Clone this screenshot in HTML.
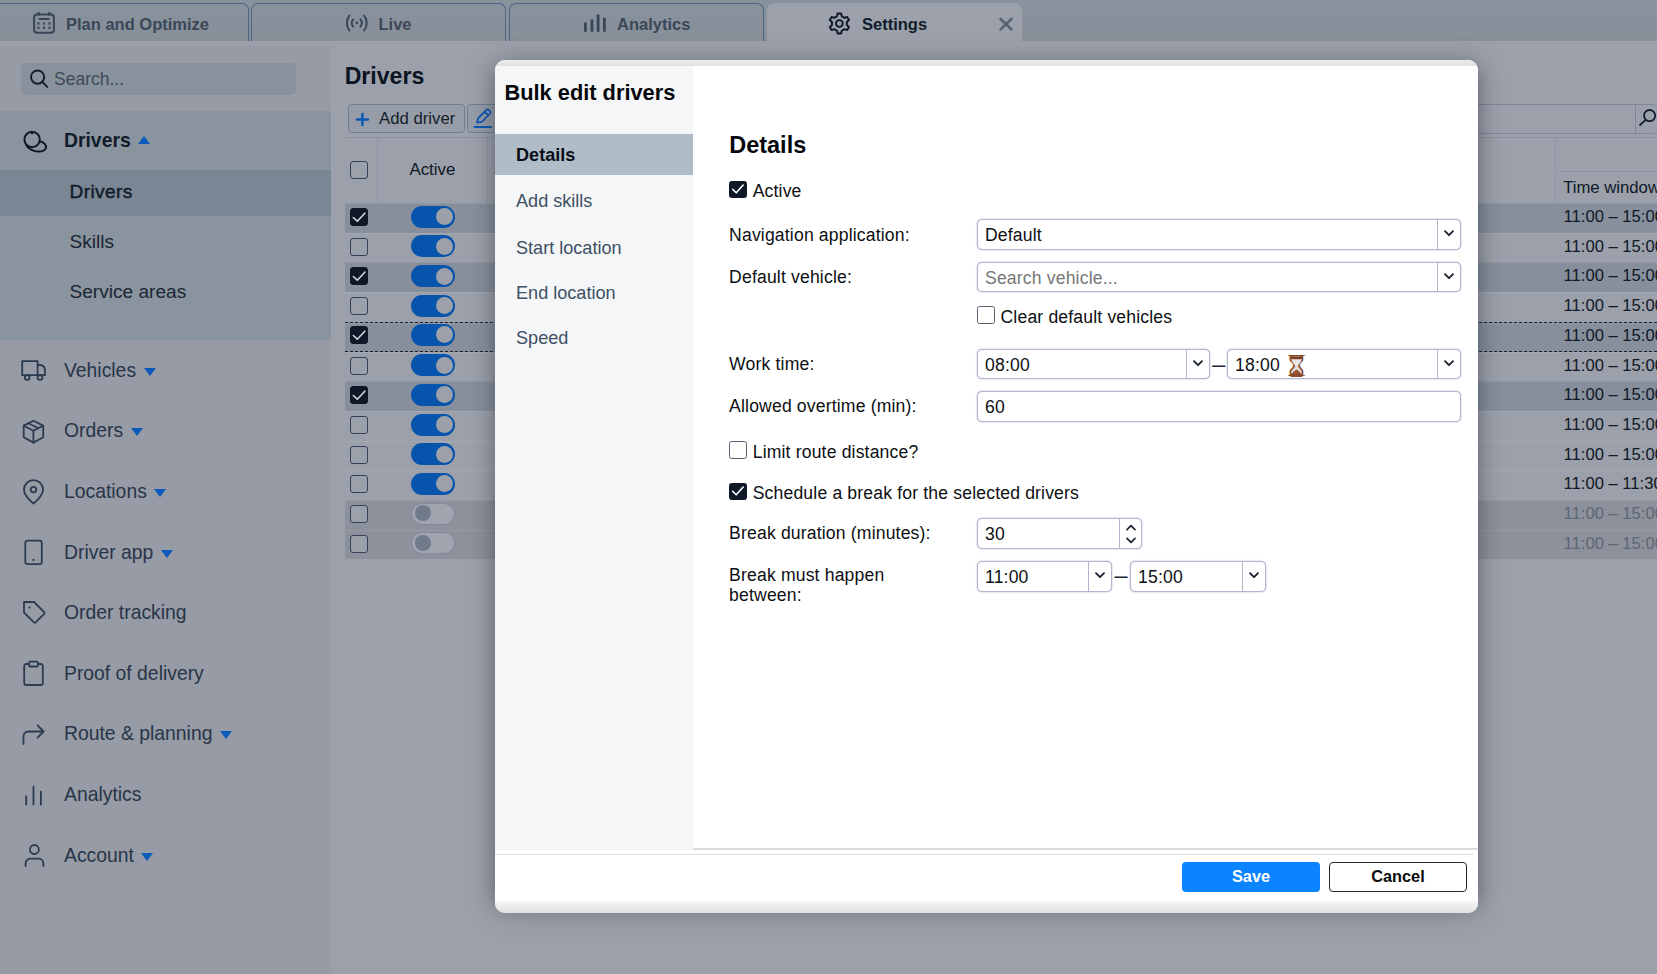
<!DOCTYPE html>
<html lang="en">
<head>
<meta charset="utf-8">
<title>Bulk edit drivers</title>
<style>
*{box-sizing:border-box;margin:0;padding:0}
html,body{width:1657px;height:974px;overflow:hidden}
body{font-family:"Liberation Sans",Arial,sans-serif;background:#9ba0aa;color:#111c2b;position:relative}
.abs{position:absolute}
svg{display:block;overflow:visible}
/* ---------- top tab bar ---------- */
#tabbar{position:absolute;left:0;top:0;width:1657px;height:41px;background:linear-gradient(#88929c 30%,#888f99)}
.tab{position:absolute;top:3px;height:38px;border:1.5px solid #4d6585;border-bottom:none;border-radius:7px 7px 0 0;font-weight:bold;font-size:16.5px;color:#3a4758;white-space:nowrap}
.tab span{position:absolute;top:10px;line-height:20px}
.tab.active{background:#9ba0aa;border-color:#9ba0aa;color:#111c2b}
/* ---------- sidebar ---------- */
#sidebar{position:absolute;left:0;top:47px;width:331px;height:927px;background:#969ba5;box-shadow:0 -1px 0 #969ba5}
#search{position:absolute;left:21px;top:16px;width:275px;height:32px;border-radius:5px;background:#88929c;font-size:17.5px;color:#3f4a59}
#search span{position:absolute;left:33px;top:6px;line-height:20px}
#grp{position:absolute;left:0;top:64px;width:331px;height:229px;background:#8a949e}
#grp .sel{position:absolute;left:0;top:58.5px;width:331px;height:46px;background:#7a8693}
.nav{position:absolute;left:64px;margin-top:-1.2px;font-size:19.35px;line-height:22px;color:#283548;white-space:nowrap}
.nav b{color:#111c2b}
.sub{position:absolute;left:69.5px;margin-top:-.8px;font-size:19.1px;line-height:22px;color:#1a2636;white-space:nowrap}
.tri{display:inline-block;width:0;height:0;border-left:6.5px solid transparent;border-right:6.5px solid transparent;margin-left:7.5px;position:relative}
.tri.dn{border-top:8px solid #0c5ab9;top:-1px}
.tri.up{border-bottom:8px solid #0c5ab9;top:-3px}
.ico{position:absolute;left:21px;width:26px;height:26px;fill:none;stroke:#2f3c4f;stroke-width:1.7;stroke-linecap:round;stroke-linejoin:round}
/* ---------- main ---------- */
#main h1{position:absolute;left:344.7px;top:62.4px;font-size:23.1px;line-height:28px;font-weight:bold;color:#0b1422}
.tbtn{position:absolute;top:104px;height:29px;border:1px solid #707c90;border-radius:3.5px;background:#979da8;font-size:16.75px;color:#141d2b;white-space:nowrap}
.row{position:absolute;left:345px;width:1312px;height:29.75px;box-shadow:inset 0 1px 0 rgba(255,255,255,.09)}
.row.on{background:#878f9c}
.row.off{background:#8c919b}
.row.foc{border-top:1.5px dashed #151e2b;border-bottom:1.5px dashed #151e2b}
.row.foc>*{margin-top:-1.5px}
.cb{position:absolute;width:18px;height:18px;border:1.5px solid #334159;border-radius:3px;background:#9ba0aa}
.cb.ck{background:#0f1826;border-color:#0f1826}
.cb svg{position:absolute;left:-1.5px;top:-1.5px}
.tg{position:absolute;width:44px;height:22px;border-radius:11px;background:#0754ac}
.tg i{position:absolute;right:2.5px;top:2.5px;width:17px;height:17px;border-radius:50%;background:#9ba0aa}
.tg.no{background:#9fa4ae;border:1.5px solid #828b99}
.tg.no i{left:2.5px;right:auto;top:1.5px;width:16px;height:16px;background:#6f7a8a}
.tw{position:absolute;left:1218.6px;margin-top:-1px;font-size:16.6px;line-height:20px;color:#0f1826;white-space:nowrap}
/* ---------- modal ---------- */
#modal{position:absolute;left:495px;top:60px;width:983px;height:852.6px;border-radius:10px;background:#fff;box-shadow:0 0 26px 1px rgba(45,50,62,.23),-12px 0 18px -12px rgba(45,50,62,.4),12px 0 18px -12px rgba(45,50,62,.4);overflow:hidden}
#mtop{position:absolute;left:0;top:0;width:983px;height:6px;background:linear-gradient(#ececec,#e0e0e0)}
#mbot{position:absolute;left:0;top:840.5px;width:983px;height:12.2px;background:linear-gradient(#f6f6f6,#e0e0e0)}
#mnav{position:absolute;left:0;top:6px;width:198px;height:784px;background:#f4f6f8}
#mnav h2{position:absolute;left:9.5px;top:14px;font-size:21.8px;line-height:26px;font-weight:bold;color:#05070b;white-space:nowrap}
#mnav .it{position:absolute;left:0;width:198px;height:40.5px;font-size:18.1px;line-height:20px;color:#3e5064;padding:11.4px 0 0 21px;white-space:nowrap}
#mnav .it.cur{background:#b0bdc9;color:#0a0f17;font-weight:bold}
#mcont{position:absolute;left:198px;top:6px;width:785px;height:784px;background:#fff;border-bottom:2px solid #dcdcdc}
#mfootline{position:absolute;left:0;top:794px;width:978px;height:1px;background:#d8e0e8}
.lbl{position:absolute;left:234.1px;margin-top:.5px;letter-spacing:.16px;font-size:17.6px;line-height:20px;color:#0d0f12;white-space:nowrap}
.fld{position:absolute;height:30px;border:1px solid #b2b5cd;border-radius:5px;background:#fff;font-size:17.6px;letter-spacing:.16px;color:#0d0f12;box-shadow:0 0 1.6px rgba(120,125,175,.75)}
.fld span{position:absolute;left:7px;top:4.9px;line-height:20px;white-space:nowrap}
.fld .dd{position:absolute;right:0;top:0;width:23px;height:100%;border-left:1px solid #b2b5cd}
.fld .dd svg{position:absolute;left:6px;top:9.5px}
.hg{position:absolute;left:52.2px;top:-2.9px;font-style:normal;font-family:"DejaVu Sans",sans-serif;color:#8b4a2b;font-size:29.5px;line-height:29.5px;letter-spacing:0;text-shadow:0 0 .6px #a86a48}
.mcb svg{position:absolute;left:-1.3px;top:-1.3px}
.dash{font-size:23.4px;line-height:23.4px;color:#1c2432}
.mcb{position:absolute;width:17.8px;height:17.8px;border:1.3px solid #5a6170;border-radius:2.5px;background:#fff}
.mcb.ck{background:#0f1826;border-color:#0f1826}
.btn{position:absolute;top:802px;width:138px;height:30px;border-radius:4px;font-size:16.3px;font-weight:bold;text-align:center;line-height:29px}
</style>
</head>
<body>
<!-- TOP TABS -->
<div id="tabbar">
  <div class="tab" style="left:-8px;width:257px"><span style="left:73px">Plan and Optimize</span></div>
  <div class="tab" style="left:251px;width:255px"><span style="left:126.5px">Live</span></div>
  <div class="tab" style="left:509px;width:255px"><span style="left:107px">Analytics</span></div>
  <div class="tab active" style="left:767px;width:255px"><span style="left:94px">Settings</span></div>
  <svg class="abs" style="left:30.0px;top:10.0px" width="28.0" height="26.0" viewBox="0 0 28.0 26.0" fill="none" stroke="#394658" stroke-width="2" stroke-linecap="round" stroke-linejoin="round"><rect x="4.1" y="4.6" width="19.8" height="18.2" rx="2.8"/><path d="M8.7 3.2 V4.5 M19.3 3.2 V4.5" stroke-width="2.6"/><path d="M9.6 9 H18.6" stroke-width="2.2"/><g fill="#394658" stroke="none"><rect x="7.3" y="12.4" width="2.2" height="2.2"/><rect x="12.8" y="12.4" width="2.2" height="2.2"/><rect x="18.4" y="12.4" width="2.2" height="2.2"/><rect x="7.3" y="16.7" width="2.2" height="2.2"/><rect x="12.8" y="16.7" width="2.2" height="2.2"/><rect x="18.4" y="16.7" width="2.2" height="2.2"/></g></svg>
  <svg class="abs" style="left:343.0px;top:11.0px" width="28.0" height="24.0" viewBox="0 0 28.0 24.0" fill="none" stroke="#394658" stroke-width="2" stroke-linecap="round" stroke-linejoin="round"><circle cx="13.8" cy="12" r="1.4" fill="#394658" stroke="none"/><path d="M10.2 8.4 a5.6 5.6 0 0 0 0 7.2 M17.4 8.4 a5.6 5.6 0 0 1 0 7.2"/><path d="M6.4 4.6 a12 12 0 0 0 0 14.8 M21.2 4.6 a12 12 0 0 1 0 14.8"/></svg>
  <svg class="abs" style="left:580.0px;top:10.0px" width="30.0" height="24.0" viewBox="0 0 30.0 24.0" fill="none" stroke="#394658" stroke-width="2.8" stroke-linecap="round" stroke-linejoin="round"><path d="M5.4 12.4 V21.7 M12 9.6 V21.7 M18.1 4.5 V21.7 M24.4 7.7 V21.7" stroke-linecap="butt"/></svg>
  <svg class="abs" style="left:827.0px;top:10.5px" width="25.0" height="25.0" viewBox="0 0 25.0 25.0" fill="none" stroke="#0d1726" stroke-width="1.9" stroke-linecap="round" stroke-linejoin="round"><path d="M10.05 5.27 L10.59 2.46 L14.21 2.46 L14.75 5.27 L17.49 6.85 L20.19 5.92 L22.00 9.04 L19.83 10.92 L19.83 14.08 L22.00 15.96 L20.19 19.08 L17.49 18.15 L14.75 19.73 L14.21 22.54 L10.59 22.54 L10.05 19.73 L7.31 18.15 L4.61 19.08 L2.80 15.96 L4.97 14.08 L4.97 10.92 L2.80 9.04 L4.61 5.92 L7.31 6.85 Z"/><circle cx="12.4" cy="12.5" r="3.4"/></svg>
  <svg class="abs" style="left:998.0px;top:16.0px" width="16.0" height="16.0" viewBox="0 0 16.0 16.0" fill="none" stroke="#566173" stroke-width="2.6" stroke-linecap="round" stroke-linejoin="round"><path d="M2.6 3 L13.4 13.4 M13.4 3 L2.6 13.4"/></svg>
</div>
<!-- SIDEBAR -->
<div id="sidebar">
  <div id="search"><span>Search...</span></div>
  <div id="grp"><div class="sel"></div></div>
  <svg class="abs" style="left:20.0px;top:81.0px" width="30.0" height="28.0" viewBox="0 0 30.0 28.0" fill="none" stroke="#0d1726" stroke-width="1.9" stroke-linecap="round" stroke-linejoin="round"><circle cx="12.1" cy="11.4" r="7.7"/><path d="M12.1 4 V6.2" stroke-width="2.4" stroke-linecap="butt"/><path d="M19.6 13.2 C23.6 14 26.8 17 25.9 20 C24.8 23.6 18.5 24.4 13.5 22.6 C10.5 21.5 7.6 19.4 6.2 17"/></svg>
  <svg class="abs" style="left:20.0px;top:311.0px" width="28.0" height="24.0" viewBox="0 0 28.0 24.0" fill="none" stroke="#2d3b50" stroke-width="1.8" stroke-linecap="round" stroke-linejoin="round"><path d="M2.2 3.2 H17.6 V17.2 H2.2 Z"/><path d="M17.6 7 H20.5 C23.5 7.6 25 10 25 12.5 V17.2 H17.6"/><circle cx="7.2" cy="19.4" r="2.4" fill="#969ba5"/><circle cx="20" cy="19.4" r="2.4" fill="#969ba5"/></svg>
  <svg class="abs" style="left:20.0px;top:371.0px" width="28.0" height="28.0" viewBox="0 0 28.0 28.0" fill="none" stroke="#2d3b50" stroke-width="1.8" stroke-linecap="round" stroke-linejoin="round"><path d="M13.4 2.7 L23.2 7.6 V19.2 L13.4 24.6 L3.7 19.2 V7.6 Z"/><path d="M3.9 7.7 L13.4 12.8 L23 7.7"/><path d="M13.4 12.8 V24.4"/><path d="M8.4 5.2 L18.3 10.2"/></svg>
  <svg class="abs" style="left:20.0px;top:430.0px" width="28.0" height="30.0" viewBox="0 0 28.0 30.0" fill="none" stroke="#2d3b50" stroke-width="1.8" stroke-linecap="round" stroke-linejoin="round"><path d="M13.5 26.5 C13.5 26.5 4 19.5 4 12.6 A9.5 9.5 0 0 1 23 12.6 C23 19.5 13.5 26.5 13.5 26.5 Z"/><circle cx="13.5" cy="12.6" r="2.8"/></svg>
  <svg class="abs" style="left:20.0px;top:491.0px" width="28.0" height="30.0" viewBox="0 0 28.0 30.0" fill="none" stroke="#2d3b50" stroke-width="1.8" stroke-linecap="round" stroke-linejoin="round"><rect x="5.3" y="2.7" width="16.5" height="23.4" rx="2.4"/><circle cx="13.5" cy="21.9" r="1.1" fill="#2d3b50" stroke="none"/></svg>
  <svg class="abs" style="left:20.0px;top:552.0px" width="28.0" height="28.0" viewBox="0 0 28.0 28.0" fill="none" stroke="#2d3b50" stroke-width="1.8" stroke-linecap="round" stroke-linejoin="round"><path d="M4 3 H14 L24.2 13.2 a1.2 1.2 0 0 1 0 1.7 L15.6 23.4 a1.2 1.2 0 0 1 -1.7 0 L4 13.5 Z"/><circle cx="9.4" cy="8.6" r="1.1" fill="#2d3b50" stroke="none"/></svg>
  <svg class="abs" style="left:20.0px;top:612.0px" width="28.0" height="30.0" viewBox="0 0 28.0 30.0" fill="none" stroke="#2d3b50" stroke-width="1.8" stroke-linecap="round" stroke-linejoin="round"><path d="M9 5 H6.2 a2 2 0 0 0 -2 2 V24 a2 2 0 0 0 2 2 H20.8 a2 2 0 0 0 2 -2 V7 a2 2 0 0 0 -2 -2 H18"/><rect x="9" y="2.7" width="9" height="4.8" rx="1.6"/></svg>
  <svg class="abs" style="left:20.0px;top:674.0px" width="28.0" height="26.0" viewBox="0 0 28.0 26.0" fill="none" stroke="#2d3b50" stroke-width="1.8" stroke-linecap="round" stroke-linejoin="round"><path d="M3.5 23 V15.5 a5 5 0 0 1 5 -5 H23.2"/><path d="M17.6 4.3 L23.6 10.5 L17.6 16.7"/></svg>
  <svg class="abs" style="left:20.0px;top:736.0px" width="28.0" height="26.0" viewBox="0 0 28.0 26.0" fill="none" stroke="#2d3b50" stroke-width="1.8" stroke-linecap="round" stroke-linejoin="round"><path d="M6.2 13.3 V21.6 M13.5 3.6 V21.6 M20.9 8.6 V21.6"/></svg>
  <svg class="abs" style="left:20.0px;top:794.0px" width="28.0" height="28.0" viewBox="0 0 28.0 28.0" fill="none" stroke="#2d3b50" stroke-width="1.8" stroke-linecap="round" stroke-linejoin="round"><circle cx="14.4" cy="8.5" r="4.5"/><path d="M5.6 25 V22.5 a4.8 4.8 0 0 1 4.8 -4.8 H18.6 a4.8 4.8 0 0 1 4.8 4.8 V25"/></svg>
  <svg class="abs" style="left:28.0px;top:21.0px" width="22.0" height="22.0" viewBox="0 0 22.0 22.0" fill="none" stroke="#141e30" stroke-width="1.9" stroke-linecap="round" stroke-linejoin="round"><circle cx="9.6" cy="9.1" r="6.6"/><path d="M14.4 14 L19.3 18.9"/></svg>
  <div class="nav" style="top:83px"><b>Drivers</b><i class="tri up"></i></div>
  <div class="sub" style="top:135px"><span style="letter-spacing:.4px;-webkit-text-stroke:.45px #111c2b;color:#111c2b">Drivers</span></div>
  <div class="sub" style="top:185px">Skills</div>
  <div class="sub" style="top:235px">Service areas</div>
  <div class="nav" style="top:313px">Vehicles<i class="tri dn"></i></div>
  <div class="nav" style="top:373px">Orders<i class="tri dn"></i></div>
  <div class="nav" style="top:434px">Locations<i class="tri dn"></i></div>
  <div class="nav" style="top:495px">Driver app<i class="tri dn"></i></div>
  <div class="nav" style="top:555px">Order tracking</div>
  <div class="nav" style="top:616px">Proof of delivery</div>
  <div class="nav" style="top:676px">Route &amp; planning<i class="tri dn"></i></div>
  <div class="nav" style="top:737px">Analytics</div>
  <div class="nav" style="top:798px">Account<i class="tri dn"></i></div>
</div>
<!-- MAIN -->
<div id="main">
  <h1>Drivers</h1>
  <div class="tbtn" style="left:348px;width:117px"><span class="abs" style="left:30px;top:4px;line-height:20px">Add driver</span></div>
  <div class="tbtn" style="left:467px;width:60px"></div>
  <div class="abs" style="left:345px;top:137px;width:1312px;height:1px;background:#8a92a0"></div>
  <div class="abs" style="left:377px;top:138px;width:1px;height:65px;background:#8d95a2"></div>
  <div class="abs" style="left:487px;top:138px;width:1px;height:65px;background:#8d95a2"></div>
  <div class="abs" style="left:1555px;top:138px;width:1px;height:65px;background:#8d95a2"></div>
  <div class="abs" style="left:1555px;top:171px;width:102px;height:1px;background:#8d95a2"></div>
  <div class="cb" style="left:350px;top:160.7px"></div>
  <div class="abs" style="left:409.4px;top:160px;font-size:16.9px;line-height:20px;color:#0f1826">Active</div>
  <div class="abs" style="left:1563.2px;top:177.6px;font-size:16.7px;line-height:20px;color:#0f1826;white-space:nowrap">Time window</div>
  <div class="abs" style="left:1300px;top:104px;width:357.5px;height:30px;border:1px solid #7d8797;border-radius:5px"></div>
  <div class="abs" style="left:1635px;top:104px;width:1px;height:30px;background:#7d8797"></div>
  <svg class="abs" style="left:354.0px;top:110.5px" width="17.0" height="17.0" viewBox="0 0 17.0 17.0" fill="none" stroke="#0c58b4" stroke-width="2.5" stroke-linecap="round" stroke-linejoin="round"><path d="M8.4 3 V14 M2.9 8.5 H13.9"/></svg>
  <svg class="abs" style="left:472.0px;top:106.0px" width="24.0" height="24.0" viewBox="0 0 24.0 24.0" fill="none" stroke="#0c58b4" stroke-width="1.8" stroke-linecap="round" stroke-linejoin="round"><path d="M5 16.6 L6.2 12.2 L14.4 4 a1.6 1.6 0 0 1 2.3 0 L18 5.3 a1.6 1.6 0 0 1 0 2.3 L9.8 15.8 Z M12.8 5.8 L16.2 9.2"/><path d="M2.6 21 H19" stroke-width="2.2"/></svg>
  <svg class="abs" style="left:1638.0px;top:107.0px" width="22.0" height="22.0" viewBox="0 0 22.0 22.0" fill="none" stroke="#141e30" stroke-width="1.8" stroke-linecap="round" stroke-linejoin="round"><circle cx="11.6" cy="8.6" r="5.6"/><path d="M7.6 12.8 L2 18"/></svg>
  <div id="rows">
    <div class="row on" style="top:203.00px"><div class="cb ck" style="left:5px;top:5px"><svg width="18" height="18" viewBox="0 0 18 18"><path d="M3.3 9.5 L7.3 13.2 L14.8 5.2" fill="none" stroke="#d4d8de" stroke-width="1.6" stroke-linecap="round" stroke-linejoin="round"/></svg></div><div class="tg" style="left:66px;top:2.7px"><i></i></div><div class="tw" style="top:5px">11:00 – 15:00</div></div>
    <div class="row" style="top:232.70px"><div class="cb" style="left:5px;top:5px"></div><div class="tg" style="left:66px;top:2.7px"><i></i></div><div class="tw" style="top:5px">11:00 – 15:00</div></div>
    <div class="row on" style="top:262.40px"><div class="cb ck" style="left:5px;top:5px"><svg width="18" height="18" viewBox="0 0 18 18"><path d="M3.3 9.5 L7.3 13.2 L14.8 5.2" fill="none" stroke="#d4d8de" stroke-width="1.6" stroke-linecap="round" stroke-linejoin="round"/></svg></div><div class="tg" style="left:66px;top:2.7px"><i></i></div><div class="tw" style="top:5px">11:00 – 15:00</div></div>
    <div class="row" style="top:292.10px"><div class="cb" style="left:5px;top:5px"></div><div class="tg" style="left:66px;top:2.7px"><i></i></div><div class="tw" style="top:5px">11:00 – 15:00</div></div>
    <div class="row on foc" style="top:321.80px"><div class="cb ck" style="left:5px;top:5px"><svg width="18" height="18" viewBox="0 0 18 18"><path d="M3.3 9.5 L7.3 13.2 L14.8 5.2" fill="none" stroke="#d4d8de" stroke-width="1.6" stroke-linecap="round" stroke-linejoin="round"/></svg></div><div class="tg" style="left:66px;top:2.7px"><i></i></div><div class="tw" style="top:5px">11:00 – 15:00</div></div>
    <div class="row" style="top:351.50px"><div class="cb" style="left:5px;top:5px"></div><div class="tg" style="left:66px;top:2.7px"><i></i></div><div class="tw" style="top:5px">11:00 – 15:00</div></div>
    <div class="row on" style="top:381.20px"><div class="cb ck" style="left:5px;top:5px"><svg width="18" height="18" viewBox="0 0 18 18"><path d="M3.3 9.5 L7.3 13.2 L14.8 5.2" fill="none" stroke="#d4d8de" stroke-width="1.6" stroke-linecap="round" stroke-linejoin="round"/></svg></div><div class="tg" style="left:66px;top:2.7px"><i></i></div><div class="tw" style="top:5px">11:00 – 15:00</div></div>
    <div class="row" style="top:410.90px"><div class="cb" style="left:5px;top:5px"></div><div class="tg" style="left:66px;top:2.7px"><i></i></div><div class="tw" style="top:5px">11:00 – 15:00</div></div>
    <div class="row" style="top:440.60px"><div class="cb" style="left:5px;top:5px"></div><div class="tg" style="left:66px;top:2.7px"><i></i></div><div class="tw" style="top:5px">11:00 – 15:00</div></div>
    <div class="row" style="top:470.30px"><div class="cb" style="left:5px;top:5px"></div><div class="tg" style="left:66px;top:2.7px"><i></i></div><div class="tw" style="top:5px">11:00 – 11:30</div></div>
    <div class="row off" style="top:500.00px"><div class="cb" style="left:5px;top:5px"></div><div class="tg no" style="left:66px;top:2.7px"><i></i></div><div class="tw" style="top:5px;color:#5d6673">11:00 – 15:00</div></div>
    <div class="row off" style="top:529.70px"><div class="cb" style="left:5px;top:5px"></div><div class="tg no" style="left:66px;top:2.7px"><i></i></div><div class="tw" style="top:5px;color:#5d6673">11:00 – 15:00</div></div>

  </div>
</div>
<!-- MODAL -->
<div id="modal">
  <div id="mtop"></div>
  <div id="mnav">
    <h2>Bulk edit drivers</h2>
    <div class="it cur" style="top:68px">Details</div>
    <div class="it" style="top:114px">Add skills</div>
    <div class="it" style="top:160.6px">Start location</div>
    <div class="it" style="top:205.6px">End location</div>
    <div class="it" style="top:250.9px">Speed</div>
  </div>
  <div id="mcont"></div>
  <h3 class="abs" style="left:234.2px;top:71.3px;font-size:23.5px;line-height:28px;font-weight:bold;color:#05070b">Details</h3>
  <div class="mcb ck" style="left:234.3px;top:120.6px"><svg width="18" height="18" viewBox="0 0 18 18"><path d="M3.6 9.3 L7.2 12.8 L14.2 5" fill="none" stroke="#fff" stroke-width="1.6" stroke-linecap="round" stroke-linejoin="round"/></svg></div>
  <div class="lbl" style="left:257.7px;top:120.4px">Active</div>
  <div class="lbl" style="top:164px">Navigation application:</div>
  <div class="fld" style="left:482px;top:159px;width:484px;height:31px"><span>Default</span><div class="dd"><svg width="10" height="7" viewBox="0 0 10 7"><path d="M1 1.2 L5 5.2 L9 1.2" fill="none" stroke="#1c2432" stroke-width="1.9" stroke-linecap="round" stroke-linejoin="round"/></svg></div></div>
  <div class="lbl" style="top:206.6px">Default vehicle:</div>
  <div class="fld" style="left:482px;top:202px;width:484px;height:30px"><span style="color:#777">Search vehicle...</span><div class="dd"><svg width="10" height="7" viewBox="0 0 10 7"><path d="M1 1.2 L5 5.2 L9 1.2" fill="none" stroke="#1c2432" stroke-width="1.9" stroke-linecap="round" stroke-linejoin="round"/></svg></div></div>
  <div class="mcb" style="left:482.3px;top:246.3px"></div>
  <div class="lbl" style="left:505.5px;top:246.4px">Clear default vehicles</div>
  <div class="lbl" style="top:293.8px">Work time:</div>
  <div class="fld" style="left:482px;top:289px;width:233px;height:30px"><span>08:00</span><div class="dd"><svg width="10" height="7" viewBox="0 0 10 7"><path d="M1 1.2 L5 5.2 L9 1.2" fill="none" stroke="#1c2432" stroke-width="1.9" stroke-linecap="round" stroke-linejoin="round"/></svg></div></div>
  <span class="abs dash" style="left:717.3px;top:293.4px">–</span>
  <div class="fld" style="left:732px;top:289px;width:234px;height:30px"><span>18:00 <i class="hg">⌛︎</i><svg class="abs" style="left:52.5px;top:-.2px" width="17" height="23" viewBox="0 0 17 23"><path d="M3.6 3.4 C3.6 8 7 9.6 7.6 11.3 C7 13 3.6 14.8 3.6 19.4 H13.4 C13.4 14.8 10 13 9.4 11.3 C10 9.6 13.4 8 13.4 3.4 Z" fill="#e9e7e4" stroke="#b9b3ad" stroke-width=".7"/><path d="M4.2 19.2 C4.6 16.6 6.8 15.4 8.5 14.2 C10.2 15.4 12.4 16.6 12.8 19.2 Z" fill="#9a5a37"/><rect x="2.6" y="1.2" width="11.8" height="3" rx="1.4" fill="#7b3f22"/><rect x="2.2" y="18.6" width="12.6" height="3.4" rx="1.5" fill="#8a4a2a"/></svg></span><div class="dd"><svg width="10" height="7" viewBox="0 0 10 7"><path d="M1 1.2 L5 5.2 L9 1.2" fill="none" stroke="#1c2432" stroke-width="1.9" stroke-linecap="round" stroke-linejoin="round"/></svg></div></div>
  <div class="lbl" style="top:335.9px">Allowed overtime (min):</div>
  <div class="fld" style="left:482px;top:331px;width:484px;height:31px"><span>60</span></div>
  <div class="mcb" style="left:234.3px;top:381.3px"></div>
  <div class="lbl" style="left:257.7px;top:381.7px">Limit route distance?</div>
  <div class="mcb ck" style="left:234.3px;top:422.6px"><svg width="18" height="18" viewBox="0 0 18 18"><path d="M3.6 9.3 L7.2 12.8 L14.2 5" fill="none" stroke="#fff" stroke-width="1.6" stroke-linecap="round" stroke-linejoin="round"/></svg></div>
  <div class="lbl" style="left:257.7px;top:422.6px">Schedule a break for the selected drivers</div>
  <div class="lbl" style="top:462.7px">Break duration (minutes):</div>
  <div class="fld" style="left:482px;top:458px;width:165px;height:31px"><span>30</span><div class="dd" style="width:22.5px"><svg style="left:6px;top:4.5px" width="10" height="20" viewBox="0 0 10 20"><path d="M1 5.6 L5 1.6 L9 5.6 M1 14.4 L5 18.4 L9 14.4" fill="none" stroke="#1c2432" stroke-width="1.7" stroke-linecap="round" stroke-linejoin="round"/></svg></div></div>
  <div class="lbl" style="top:505.4px;line-height:19.7px">Break must happen<br>between:</div>
  <div class="fld" style="left:482px;top:501px;width:135px;height:31px"><span>11:00</span><div class="dd"><svg width="10" height="7" viewBox="0 0 10 7"><path d="M1 1.2 L5 5.2 L9 1.2" fill="none" stroke="#1c2432" stroke-width="1.9" stroke-linecap="round" stroke-linejoin="round"/></svg></div></div>
  <span class="abs dash" style="left:619.6px;top:504.2px">–</span>
  <div class="fld" style="left:635px;top:501px;width:136px;height:31px"><span>15:00</span><div class="dd"><svg width="10" height="7" viewBox="0 0 10 7"><path d="M1 1.2 L5 5.2 L9 1.2" fill="none" stroke="#1c2432" stroke-width="1.9" stroke-linecap="round" stroke-linejoin="round"/></svg></div></div>

  <div id="mfootline"></div>
  <div class="btn" style="left:687px;background:#0a84ff;color:#fff">Save</div>
  <div class="btn" style="left:834px;background:#fff;color:#0a0a0a;border:1.5px solid #2a2a2a;line-height:27px">Cancel</div>
  <div id="mbot"></div>
</div>
</body>
</html>
